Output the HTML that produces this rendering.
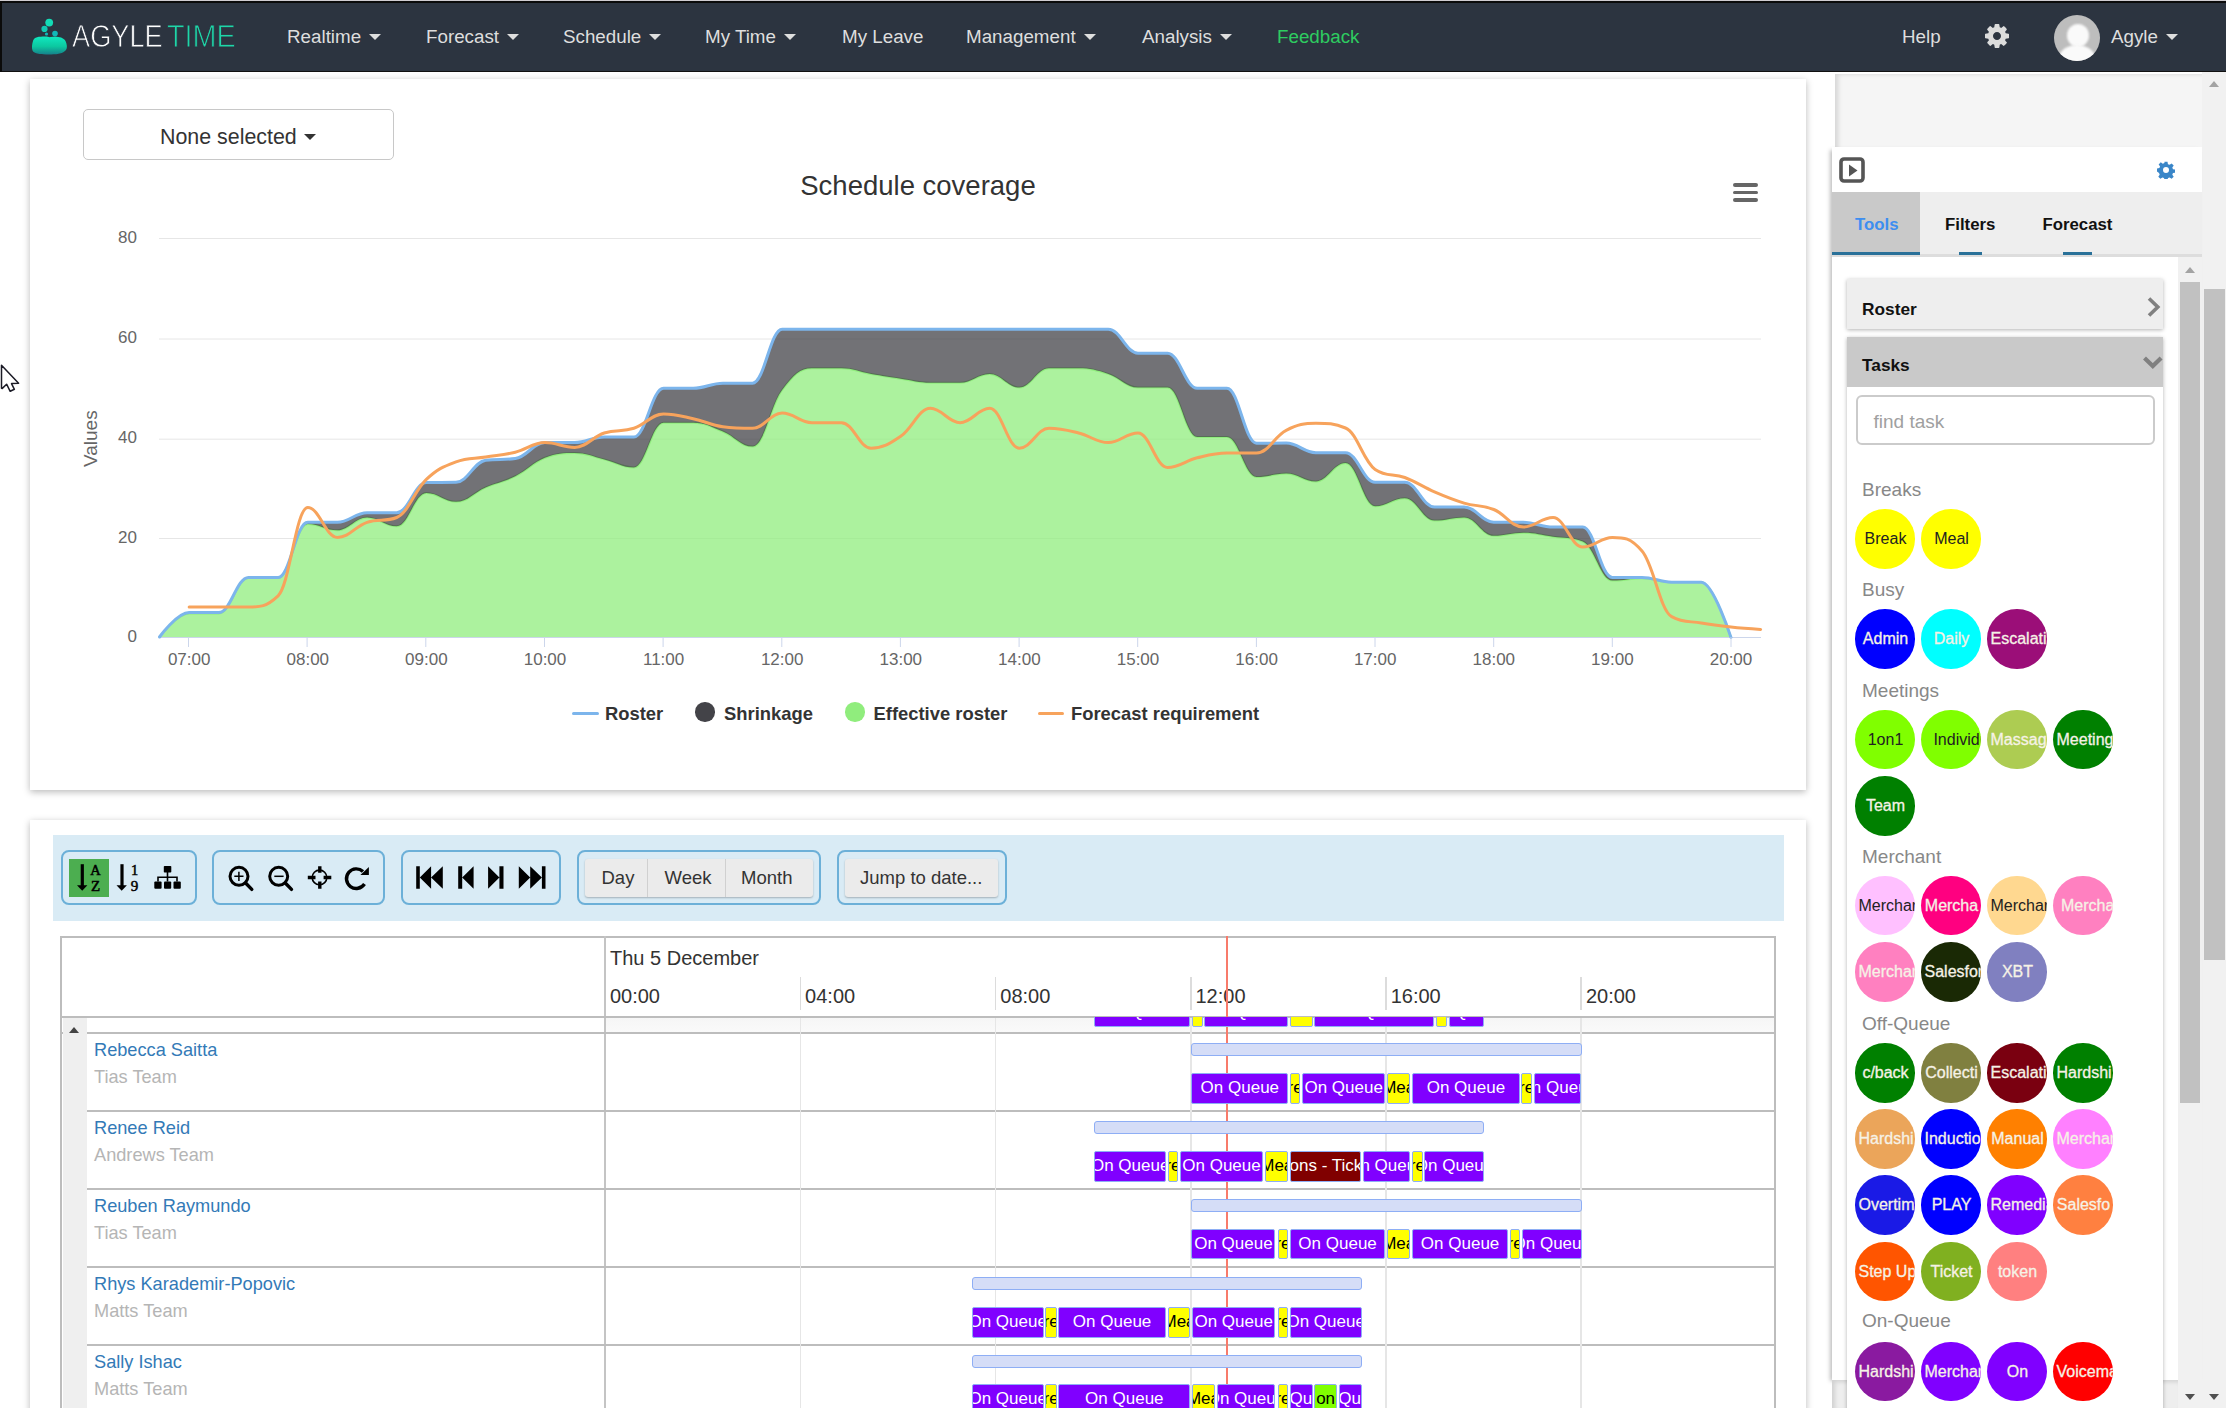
<!DOCTYPE html>
<html><head><meta charset="utf-8">
<style>
*{box-sizing:border-box;margin:0;padding:0}
html,body{width:2226px;height:1408px;overflow:hidden;background:#fff;font-family:"Liberation Sans",sans-serif;position:relative}
.abs{position:absolute}
#topline{left:0;top:0;width:2226px;height:3px;background:#0b0b0b}
#topline2{left:0;top:0;width:2226px;height:1px;background:#cfccd1;z-index:5}
#leftline{left:0;top:1px;width:2px;height:71px;background:#0b0b0b}
#nav{left:2px;top:3px;width:2224px;height:68.8px;background:#2c3440;border-bottom:1px solid #111}
.nv{position:absolute;top:23px;font-size:18.8px;color:#dedede;white-space:nowrap;line-height:22px}
.caret{display:inline-block;width:0;height:0;border-left:6px solid transparent;border-right:6px solid transparent;border-top:6px solid #dedede;vertical-align:middle;margin-left:8px;position:relative;top:-1px}
.panel{position:absolute;background:#fff;box-shadow:0 2px 7px rgba(0,0,0,.28)}
.yl{position:absolute;left:0;width:107px;text-align:right;font-size:17px;color:#666;line-height:22px}
.xl{position:absolute;top:569.5px;width:100px;text-align:center;font-size:17px;color:#666;line-height:22px}
.lg{position:absolute;top:624px;font-size:18.4px;font-weight:bold;color:#333;line-height:22px;white-space:nowrap}
</style></head><body>
<div class="abs" id="topline"></div>
<div class="abs" id="topline2"></div>
<div class="abs" id="nav">
<svg class="abs" style="left:27.5px;top:14px" width="40" height="42" viewBox="0 0 40 42">
<defs><linearGradient id="lg1" x1="0" y1="0" x2="0" y2="1"><stop offset="0" stop-color="#10e8c0"/><stop offset="0.55" stop-color="#0cc8a0"/><stop offset="1" stop-color="#16808a"/></linearGradient>
<linearGradient id="lg2" x1="0" y1="0" x2="0" y2="1"><stop offset="0" stop-color="#14d8b8"/><stop offset="1" stop-color="#10a0b0"/></linearGradient></defs>
<circle cx="19.2" cy="5.6" r="3.9" fill="#13dcb6"/>
<circle cx="14.5" cy="11.9" r="3.1" fill="#12c8b2"/>
<circle cx="25" cy="16.6" r="2.8" fill="#12b8b8"/>
<circle cx="16.5" cy="17" r="1.6" fill="#12b8b8"/>
<path d="M3 24 C4 20 9 19.5 15 19.5 C18 19.5 19 20.5 21 20 C26 19.5 33 19.5 35.5 24 C37 27 37.5 31 36 33 C33 37 25 37.5 19 37.5 C11 37.5 4 37 2.5 33.5 C1.5 31 2 27 3 24 Z" fill="url(#lg1)"/>
</svg>
<div class="nv" style="left:70px;top:14px;font-size:32px;line-height:38px;color:#fff;transform:scaleX(0.85);transform-origin:0 0;-webkit-text-stroke:0.9px #2c3440">AGYLE</div>
<div class="nv" style="left:164.5px;top:14px;font-size:32px;line-height:38px;color:#1ed6a8;transform:scaleX(0.9);transform-origin:0 0;-webkit-text-stroke:0.9px #2c3440">TIME</div>
<div class="nv" style="left:285px">Realtime<span class="caret"></span></div>
<div class="nv" style="left:424px">Forecast<span class="caret"></span></div>
<div class="nv" style="left:561px">Schedule<span class="caret"></span></div>
<div class="nv" style="left:703px">My Time<span class="caret"></span></div>
<div class="nv" style="left:840px">My Leave</div>
<div class="nv" style="left:964px">Management<span class="caret"></span></div>
<div class="nv" style="left:1140px">Analysis<span class="caret"></span></div>
<div class="nv" style="left:1275px;color:#2ecc60">Feedback</div>
<div class="nv" style="left:1900px">Help</div>
<svg class="abs" style="left:1983px;top:20.5px" width="24" height="24" viewBox="0 0 1536 1536"><path fill="#dcdcdc" d="M1024 768q0-106-75-181t-181-75-181 75-75 181 75 181 181 75 181-75 75-181zm512-109v222q0 12-8 23t-20 13l-185 28q-19 54-39 91 35 50 107 138 10 12 10 25t-9 23q-27 37-99 108t-94 71q-12 0-26-9l-138-108q-44 23-91 38-16 136-29 186-7 28-36 28h-222q-14 0-24.5-8.5t-11.5-21.5l-28-184q-49-16-90-37l-141 107q-10 9-25 9-14 0-25-11-126-114-165-168-7-10-7-23 0-12 8-23 15-21 51-66.5t54-70.5q-27-50-41-99l-183-27q-13-2-21-12.5t-8-23.5v-222q0-12 8-23t19-13l186-28q14-46 39-92-40-57-107-138-10-12-10-24 0-10 9-23 26-36 98.5-107.5t94.5-71.5q13 0 26 10l138 107q44-23 91-38 16-136 29-186 7-28 36-28h222q14 0 24.5 8.5t11.5 21.5l28 184q49 16 90 37l142-107q9-9 24-9 13 0 25 10 129 119 165 170 7 8 7 22 0 12-8 23-15 21-51 66.5t-54 70.5q26 50 41 98l183 28q13 2 21 12.5t8 23.5z"/></svg>
<div class="abs" style="left:2052px;top:12px;width:46px;height:46px;border-radius:50%;background:#bdbdbd;overflow:hidden">
<div class="abs" style="left:12.5px;top:9px;width:22px;height:23px;border-radius:50%;background:#fafafa;filter:blur(0.8px)"></div>
<div class="abs" style="left:5px;top:30px;width:36px;height:26px;border-radius:50% 50% 0 0;background:#fafafa;filter:blur(0.8px)"></div>
</div>
<div class="nv" style="left:2109px">Agyle<span class="caret"></span></div>
</div>
<div class="abs" id="leftline"></div>

<!-- chart panel -->
<div class="panel" id="chartp" style="left:30px;top:79px;width:1776px;height:711px">
<svg class="abs" style="left:0;top:0" width="1776" height="711" viewBox="30 79 1776 711">
<g stroke="#e6e6e6" stroke-width="1">
<line x1="159" y1="238.5" x2="1761" y2="238.5"/><line x1="159" y1="339" x2="1761" y2="339"/><line x1="159" y1="439.2" x2="1761" y2="439.2"/><line x1="159" y1="538.5" x2="1761" y2="538.5"/>
</g>
<path d="M159.50,637.00 C159.50,637.00 177.29,613.50 189.15,613.50 C201.01,613.50 206.94,613.50 218.80,613.50 C230.66,613.50 236.59,578.00 248.45,578.00 C260.31,578.00 266.24,578.00 278.10,578.00 C289.96,578.00 295.89,523.90 307.75,523.90 C319.61,523.90 325.54,530.30 337.40,530.30 C349.26,530.30 355.19,517.50 367.05,517.50 C378.91,517.50 384.84,526.30 396.70,526.30 C408.56,526.30 414.49,493.00 426.35,493.00 C438.21,493.00 444.14,501.80 456.00,501.80 C467.86,501.80 473.79,492.52 485.65,487.40 C497.51,482.28 503.44,482.12 515.30,476.20 C527.16,470.28 533.09,462.44 544.95,457.80 C556.81,453.16 562.74,453.00 574.60,453.00 C586.46,453.00 592.39,456.52 604.25,459.40 C616.11,462.28 622.04,467.40 633.90,467.40 C645.76,467.40 651.69,422.70 663.55,422.70 C675.41,422.70 681.34,422.70 693.20,422.70 C705.06,422.70 710.99,426.72 722.85,431.50 C734.71,436.28 740.64,446.60 752.50,446.60 C764.36,446.60 770.29,405.66 782.15,390.00 C794.01,374.34 799.94,368.30 811.80,368.30 C823.66,368.30 829.59,368.30 841.45,368.30 C853.31,368.30 859.24,371.92 871.10,374.00 C882.96,376.08 888.89,376.96 900.75,378.70 C912.61,380.44 918.54,382.70 930.40,382.70 C942.26,382.70 948.19,382.70 960.05,382.70 C971.91,382.70 977.84,373.90 989.70,373.90 C1001.56,373.90 1007.49,387.50 1019.35,387.50 C1031.21,387.50 1037.14,368.30 1049.00,368.30 C1060.86,368.30 1066.79,368.30 1078.65,368.30 C1090.51,368.30 1096.44,370.06 1108.30,373.90 C1120.16,377.74 1126.09,387.50 1137.95,387.50 C1149.81,387.50 1155.74,387.50 1167.60,387.50 C1179.46,387.50 1185.39,437.10 1197.25,437.10 C1209.11,437.10 1215.04,437.10 1226.90,437.10 C1238.76,437.10 1244.69,477.00 1256.55,477.00 C1268.41,477.00 1274.34,473.50 1286.20,473.50 C1298.06,473.50 1303.99,481.50 1315.85,481.50 C1327.71,481.50 1333.64,463.10 1345.50,463.10 C1357.36,463.10 1363.29,506.30 1375.15,506.30 C1387.01,506.30 1392.94,498.30 1404.80,498.30 C1416.66,498.30 1422.59,520.60 1434.45,520.60 C1446.31,520.60 1452.24,517.40 1464.10,517.40 C1475.96,517.40 1481.89,535.80 1493.75,535.80 C1505.61,535.80 1511.54,532.70 1523.40,532.70 C1535.26,532.70 1541.19,534.94 1553.05,536.70 C1564.91,538.46 1570.84,536.70 1582.70,541.50 C1594.56,546.30 1600.49,580.60 1612.35,580.60 C1624.21,580.60 1630.14,578.20 1642.00,578.20 C1653.86,578.20 1659.79,582.20 1671.65,582.20 C1683.51,582.20 1689.44,582.20 1701.30,582.20 C1713.16,582.20 1730.95,637.40 1730.95,637.40 L1730.95,637.4 L159.50,637.4 Z" fill="rgba(144,237,125,0.75)"/>
<path d="M159.50,637.00 C159.50,637.00 177.29,613.50 189.15,613.50 C201.01,613.50 206.94,613.50 218.80,613.50 C230.66,613.50 236.59,578.00 248.45,578.00 C260.31,578.00 266.24,578.00 278.10,578.00 C289.96,578.00 295.89,523.90 307.75,523.90 C319.61,523.90 325.54,530.30 337.40,530.30 C349.26,530.30 355.19,517.50 367.05,517.50 C378.91,517.50 384.84,526.30 396.70,526.30 C408.56,526.30 414.49,493.00 426.35,493.00 C438.21,493.00 444.14,501.80 456.00,501.80 C467.86,501.80 473.79,492.52 485.65,487.40 C497.51,482.28 503.44,482.12 515.30,476.20 C527.16,470.28 533.09,462.44 544.95,457.80 C556.81,453.16 562.74,453.00 574.60,453.00 C586.46,453.00 592.39,456.52 604.25,459.40 C616.11,462.28 622.04,467.40 633.90,467.40 C645.76,467.40 651.69,422.70 663.55,422.70 C675.41,422.70 681.34,422.70 693.20,422.70 C705.06,422.70 710.99,426.72 722.85,431.50 C734.71,436.28 740.64,446.60 752.50,446.60 C764.36,446.60 770.29,405.66 782.15,390.00 C794.01,374.34 799.94,368.30 811.80,368.30 C823.66,368.30 829.59,368.30 841.45,368.30 C853.31,368.30 859.24,371.92 871.10,374.00 C882.96,376.08 888.89,376.96 900.75,378.70 C912.61,380.44 918.54,382.70 930.40,382.70 C942.26,382.70 948.19,382.70 960.05,382.70 C971.91,382.70 977.84,373.90 989.70,373.90 C1001.56,373.90 1007.49,387.50 1019.35,387.50 C1031.21,387.50 1037.14,368.30 1049.00,368.30 C1060.86,368.30 1066.79,368.30 1078.65,368.30 C1090.51,368.30 1096.44,370.06 1108.30,373.90 C1120.16,377.74 1126.09,387.50 1137.95,387.50 C1149.81,387.50 1155.74,387.50 1167.60,387.50 C1179.46,387.50 1185.39,437.10 1197.25,437.10 C1209.11,437.10 1215.04,437.10 1226.90,437.10 C1238.76,437.10 1244.69,477.00 1256.55,477.00 C1268.41,477.00 1274.34,473.50 1286.20,473.50 C1298.06,473.50 1303.99,481.50 1315.85,481.50 C1327.71,481.50 1333.64,463.10 1345.50,463.10 C1357.36,463.10 1363.29,506.30 1375.15,506.30 C1387.01,506.30 1392.94,498.30 1404.80,498.30 C1416.66,498.30 1422.59,520.60 1434.45,520.60 C1446.31,520.60 1452.24,517.40 1464.10,517.40 C1475.96,517.40 1481.89,535.80 1493.75,535.80 C1505.61,535.80 1511.54,532.70 1523.40,532.70 C1535.26,532.70 1541.19,534.94 1553.05,536.70 C1564.91,538.46 1570.84,536.70 1582.70,541.50 C1594.56,546.30 1600.49,580.60 1612.35,580.60 C1624.21,580.60 1630.14,578.20 1642.00,578.20 C1653.86,578.20 1659.79,582.20 1671.65,582.20 C1683.51,582.20 1689.44,582.20 1701.30,582.20 C1713.16,582.20 1730.95,637.40 1730.95,637.40" fill="none" stroke="#90ed7d" stroke-width="2"/>
<path d="M159.50,637.00 C159.50,637.00 177.29,612.60 189.15,612.60 C201.01,612.60 206.94,612.60 218.80,612.60 C230.66,612.60 236.59,577.40 248.45,577.40 C260.31,577.40 266.24,577.40 278.10,577.40 C289.96,577.40 295.89,522.30 307.75,522.30 C319.61,522.30 325.54,522.30 337.40,522.30 C349.26,522.30 355.19,512.70 367.05,512.70 C378.91,512.70 384.84,512.70 396.70,512.70 C408.56,512.70 414.49,482.90 426.35,482.60 C438.21,482.30 444.14,482.60 456.00,482.30 C467.86,482.00 473.79,461.80 485.65,460.20 C497.51,458.60 503.44,460.20 515.30,458.60 C527.16,457.00 533.09,442.60 544.95,442.60 C556.81,442.60 562.74,442.60 574.60,442.60 C586.46,442.60 592.39,437.00 604.25,437.00 C616.11,437.00 622.04,437.00 633.90,437.00 C645.76,437.00 651.69,388.30 663.55,388.30 C675.41,388.30 681.34,388.30 693.20,388.30 C705.06,388.30 710.99,383.20 722.85,383.20 C734.71,383.20 740.64,383.20 752.50,383.20 C764.36,383.20 770.29,329.20 782.15,329.20 C794.01,329.20 799.94,329.20 811.80,329.20 C823.66,329.20 829.59,329.20 841.45,329.20 C853.31,329.20 859.24,329.20 871.10,329.20 C882.96,329.20 888.89,329.20 900.75,329.20 C912.61,329.20 918.54,329.20 930.40,329.20 C942.26,329.20 948.19,329.20 960.05,329.20 C971.91,329.20 977.84,329.20 989.70,329.20 C1001.56,329.20 1007.49,329.20 1019.35,329.20 C1031.21,329.20 1037.14,329.20 1049.00,329.20 C1060.86,329.20 1066.79,329.20 1078.65,329.20 C1090.51,329.20 1096.44,329.20 1108.30,329.20 C1120.16,329.20 1126.09,353.20 1137.95,353.20 C1149.81,353.20 1155.74,353.20 1167.60,353.20 C1179.46,353.20 1185.39,388.30 1197.25,388.30 C1209.11,388.30 1215.04,388.30 1226.90,388.30 C1238.76,388.30 1244.69,443.30 1256.55,443.30 C1268.41,443.30 1274.34,443.10 1286.20,443.10 C1298.06,443.10 1303.99,452.70 1315.85,452.70 C1327.71,452.70 1333.64,452.70 1345.50,452.70 C1357.36,452.70 1363.29,482.30 1375.15,482.30 C1387.01,482.30 1392.94,482.30 1404.80,482.30 C1416.66,482.30 1422.59,507.00 1434.45,507.00 C1446.31,507.00 1452.24,507.00 1464.10,507.00 C1475.96,507.00 1481.89,522.10 1493.75,522.20 C1505.61,522.30 1511.54,522.20 1523.40,522.30 C1535.26,522.40 1541.19,527.10 1553.05,527.10 C1564.91,527.10 1570.84,527.10 1582.70,527.10 C1594.56,527.10 1600.49,577.40 1612.35,577.40 C1624.21,577.40 1630.14,577.40 1642.00,577.40 C1653.86,577.40 1659.79,582.20 1671.65,582.20 C1683.51,582.20 1689.44,582.20 1701.30,582.20 C1713.16,582.20 1730.95,637.40 1730.95,637.40 L1730.95,637.40 C1730.95,637.40 1713.16,582.20 1701.30,582.20 C1689.44,582.20 1683.51,582.20 1671.65,582.20 C1659.79,582.20 1653.86,578.20 1642.00,578.20 C1630.14,578.20 1624.21,580.60 1612.35,580.60 C1600.49,580.60 1594.56,546.30 1582.70,541.50 C1570.84,536.70 1564.91,538.46 1553.05,536.70 C1541.19,534.94 1535.26,532.70 1523.40,532.70 C1511.54,532.70 1505.61,535.80 1493.75,535.80 C1481.89,535.80 1475.96,517.40 1464.10,517.40 C1452.24,517.40 1446.31,520.60 1434.45,520.60 C1422.59,520.60 1416.66,498.30 1404.80,498.30 C1392.94,498.30 1387.01,506.30 1375.15,506.30 C1363.29,506.30 1357.36,463.10 1345.50,463.10 C1333.64,463.10 1327.71,481.50 1315.85,481.50 C1303.99,481.50 1298.06,473.50 1286.20,473.50 C1274.34,473.50 1268.41,477.00 1256.55,477.00 C1244.69,477.00 1238.76,437.10 1226.90,437.10 C1215.04,437.10 1209.11,437.10 1197.25,437.10 C1185.39,437.10 1179.46,387.50 1167.60,387.50 C1155.74,387.50 1149.81,387.50 1137.95,387.50 C1126.09,387.50 1120.16,377.74 1108.30,373.90 C1096.44,370.06 1090.51,368.30 1078.65,368.30 C1066.79,368.30 1060.86,368.30 1049.00,368.30 C1037.14,368.30 1031.21,387.50 1019.35,387.50 C1007.49,387.50 1001.56,373.90 989.70,373.90 C977.84,373.90 971.91,382.70 960.05,382.70 C948.19,382.70 942.26,382.70 930.40,382.70 C918.54,382.70 912.61,380.44 900.75,378.70 C888.89,376.96 882.96,376.08 871.10,374.00 C859.24,371.92 853.31,368.30 841.45,368.30 C829.59,368.30 823.66,368.30 811.80,368.30 C799.94,368.30 794.01,374.34 782.15,390.00 C770.29,405.66 764.36,446.60 752.50,446.60 C740.64,446.60 734.71,436.28 722.85,431.50 C710.99,426.72 705.06,422.70 693.20,422.70 C681.34,422.70 675.41,422.70 663.55,422.70 C651.69,422.70 645.76,467.40 633.90,467.40 C622.04,467.40 616.11,462.28 604.25,459.40 C592.39,456.52 586.46,453.00 574.60,453.00 C562.74,453.00 556.81,453.16 544.95,457.80 C533.09,462.44 527.16,470.28 515.30,476.20 C503.44,482.12 497.51,482.28 485.65,487.40 C473.79,492.52 467.86,501.80 456.00,501.80 C444.14,501.80 438.21,493.00 426.35,493.00 C414.49,493.00 408.56,526.30 396.70,526.30 C384.84,526.30 378.91,517.50 367.05,517.50 C355.19,517.50 349.26,530.30 337.40,530.30 C325.54,530.30 319.61,523.90 307.75,523.90 C295.89,523.90 289.96,578.00 278.10,578.00 C266.24,578.00 260.31,578.00 248.45,578.00 C236.59,578.00 230.66,613.50 218.80,613.50 C206.94,613.50 201.01,613.50 189.15,613.50 C177.29,613.50 159.50,637.00 159.50,637.00 Z" fill="rgba(67,67,72,0.75)"/>
<line x1="159" y1="637.5" x2="1761" y2="637.5" stroke="#ccd6eb" stroke-width="1"/>
<path d="M159.50,637.00 C159.50,637.00 177.29,612.60 189.15,612.60 C201.01,612.60 206.94,612.60 218.80,612.60 C230.66,612.60 236.59,577.40 248.45,577.40 C260.31,577.40 266.24,577.40 278.10,577.40 C289.96,577.40 295.89,522.30 307.75,522.30 C319.61,522.30 325.54,522.30 337.40,522.30 C349.26,522.30 355.19,512.70 367.05,512.70 C378.91,512.70 384.84,512.70 396.70,512.70 C408.56,512.70 414.49,482.90 426.35,482.60 C438.21,482.30 444.14,482.60 456.00,482.30 C467.86,482.00 473.79,461.80 485.65,460.20 C497.51,458.60 503.44,460.20 515.30,458.60 C527.16,457.00 533.09,442.60 544.95,442.60 C556.81,442.60 562.74,442.60 574.60,442.60 C586.46,442.60 592.39,437.00 604.25,437.00 C616.11,437.00 622.04,437.00 633.90,437.00 C645.76,437.00 651.69,388.30 663.55,388.30 C675.41,388.30 681.34,388.30 693.20,388.30 C705.06,388.30 710.99,383.20 722.85,383.20 C734.71,383.20 740.64,383.20 752.50,383.20 C764.36,383.20 770.29,329.20 782.15,329.20 C794.01,329.20 799.94,329.20 811.80,329.20 C823.66,329.20 829.59,329.20 841.45,329.20 C853.31,329.20 859.24,329.20 871.10,329.20 C882.96,329.20 888.89,329.20 900.75,329.20 C912.61,329.20 918.54,329.20 930.40,329.20 C942.26,329.20 948.19,329.20 960.05,329.20 C971.91,329.20 977.84,329.20 989.70,329.20 C1001.56,329.20 1007.49,329.20 1019.35,329.20 C1031.21,329.20 1037.14,329.20 1049.00,329.20 C1060.86,329.20 1066.79,329.20 1078.65,329.20 C1090.51,329.20 1096.44,329.20 1108.30,329.20 C1120.16,329.20 1126.09,353.20 1137.95,353.20 C1149.81,353.20 1155.74,353.20 1167.60,353.20 C1179.46,353.20 1185.39,388.30 1197.25,388.30 C1209.11,388.30 1215.04,388.30 1226.90,388.30 C1238.76,388.30 1244.69,443.30 1256.55,443.30 C1268.41,443.30 1274.34,443.10 1286.20,443.10 C1298.06,443.10 1303.99,452.70 1315.85,452.70 C1327.71,452.70 1333.64,452.70 1345.50,452.70 C1357.36,452.70 1363.29,482.30 1375.15,482.30 C1387.01,482.30 1392.94,482.30 1404.80,482.30 C1416.66,482.30 1422.59,507.00 1434.45,507.00 C1446.31,507.00 1452.24,507.00 1464.10,507.00 C1475.96,507.00 1481.89,522.10 1493.75,522.20 C1505.61,522.30 1511.54,522.20 1523.40,522.30 C1535.26,522.40 1541.19,527.10 1553.05,527.10 C1564.91,527.10 1570.84,527.10 1582.70,527.10 C1594.56,527.10 1600.49,577.40 1612.35,577.40 C1624.21,577.40 1630.14,577.40 1642.00,577.40 C1653.86,577.40 1659.79,582.20 1671.65,582.20 C1683.51,582.20 1689.44,582.20 1701.30,582.20 C1713.16,582.20 1730.95,637.40 1730.95,637.40" fill="none" stroke="#7cb5ec" stroke-width="3" stroke-linejoin="round" stroke-linecap="round"/>
<path d="M189.15,607.00 C189.15,607.00 206.94,607.00 218.80,607.00 C230.66,607.00 236.59,607.00 248.45,607.00 C260.31,607.00 266.24,607.00 278.10,595.80 C289.96,584.60 295.89,507.60 307.75,507.60 C319.61,507.60 325.54,537.50 337.40,537.50 C349.26,537.50 355.19,526.30 367.05,522.30 C378.91,518.30 384.84,522.30 396.70,517.50 C408.56,512.70 414.49,490.54 426.35,479.40 C438.21,468.26 444.14,466.28 456.00,461.80 C467.86,457.32 473.79,458.92 485.65,457.00 C497.51,455.08 503.44,455.08 515.30,452.20 C527.16,449.32 533.09,442.60 544.95,442.60 C556.81,442.60 562.74,447.40 574.60,447.40 C586.46,447.40 592.39,436.82 604.25,433.00 C616.11,429.18 622.04,432.12 633.90,428.30 C645.76,424.48 651.69,413.90 663.55,413.90 C675.41,413.90 681.34,416.14 693.20,418.70 C705.06,421.26 710.99,425.10 722.85,426.70 C734.71,428.30 740.64,428.30 752.50,428.30 C764.36,428.30 770.29,413.10 782.15,413.10 C794.01,413.10 799.94,422.70 811.80,422.70 C823.66,422.70 829.59,422.70 841.45,422.70 C853.31,422.70 859.24,448.20 871.10,448.20 C882.96,448.20 888.89,444.28 900.75,436.30 C912.61,428.32 918.54,408.30 930.40,408.30 C942.26,408.30 948.19,422.70 960.05,422.70 C971.91,422.70 977.84,408.30 989.70,408.30 C1001.56,408.30 1007.49,448.20 1019.35,448.20 C1031.21,448.20 1037.14,428.30 1049.00,428.30 C1060.86,428.30 1066.79,430.14 1078.65,433.00 C1090.51,435.86 1096.44,442.60 1108.30,442.60 C1120.16,442.60 1126.09,433.00 1137.95,433.00 C1149.81,433.00 1155.74,467.40 1167.60,467.40 C1179.46,467.40 1185.39,460.68 1197.25,457.80 C1209.11,454.92 1215.04,453.00 1226.90,453.00 C1238.76,453.00 1244.69,453.00 1256.55,453.00 C1268.41,453.00 1274.34,436.26 1286.20,430.30 C1298.06,424.34 1303.99,423.20 1315.85,423.20 C1327.71,423.20 1333.64,423.20 1345.50,428.00 C1357.36,432.80 1363.29,461.50 1375.15,469.50 C1387.01,477.50 1392.94,473.02 1404.80,477.50 C1416.66,481.98 1422.59,486.78 1434.45,491.90 C1446.31,497.02 1452.24,499.58 1464.10,503.10 C1475.96,506.62 1481.89,504.70 1493.75,509.50 C1505.61,514.30 1511.54,527.10 1523.40,527.10 C1535.26,527.10 1541.19,517.50 1553.05,517.50 C1564.91,517.50 1570.84,547.10 1582.70,547.10 C1594.56,547.10 1600.49,537.50 1612.35,537.50 C1624.21,537.50 1630.14,537.50 1642.00,551.00 C1653.86,564.50 1659.79,610.20 1671.65,616.60 C1683.51,623.00 1689.44,620.92 1701.30,623.00 C1713.16,625.08 1719.09,625.72 1730.95,627.00 C1742.81,628.28 1760.60,629.40 1760.60,629.40" fill="none" stroke="#f7a35c" stroke-width="3" stroke-linejoin="round" stroke-linecap="round"/>
<g stroke="#ccd6eb" stroke-width="1"><line x1="188.5" y1="637" x2="188.5" y2="647"/><line x1="307.1" y1="637" x2="307.1" y2="647"/><line x1="425.8" y1="637" x2="425.8" y2="647"/><line x1="544.5" y1="637" x2="544.5" y2="647"/><line x1="663.1" y1="637" x2="663.1" y2="647"/><line x1="781.8" y1="637" x2="781.8" y2="647"/><line x1="900.4" y1="637" x2="900.4" y2="647"/><line x1="1019.1" y1="637" x2="1019.1" y2="647"/><line x1="1137.7" y1="637" x2="1137.7" y2="647"/><line x1="1256.4" y1="637" x2="1256.4" y2="647"/><line x1="1375.0" y1="637" x2="1375.0" y2="647"/><line x1="1493.7" y1="637" x2="1493.7" y2="647"/><line x1="1612.3" y1="637" x2="1612.3" y2="647"/><line x1="1731.0" y1="637" x2="1731.0" y2="647"/></g>
</svg>
<div class="abs" style="left:53px;top:30px;width:311px;height:51px;border:1.5px solid #c8c8c8;border-radius:5px"></div>
<div class="abs" style="left:130px;top:44.5px;font-size:21.4px;color:#333;line-height:26px;white-space:nowrap">None selected</div>
<div class="abs" style="left:274px;top:55px;width:0;height:0;border-left:6px solid transparent;border-right:6px solid transparent;border-top:6px solid #333"></div>
<div class="abs" style="left:0;top:91px;width:1776px;text-align:center;font-size:27.5px;color:#333;line-height:32px;padding-right:0;white-space:nowrap">Schedule coverage</div>
<div class="abs" style="left:1703px;top:104px;width:25px;height:3.5px;background:#666;border-radius:2px"></div>
<div class="abs" style="left:1703px;top:111.5px;width:25px;height:3.5px;background:#666;border-radius:2px"></div>
<div class="abs" style="left:1703px;top:119px;width:25px;height:3.5px;background:#666;border-radius:2px"></div>
<div class="yl" style="top:148px">80</div><div class="yl" style="top:248px">60</div><div class="yl" style="top:348px">40</div><div class="yl" style="top:448px">20</div><div class="yl" style="top:547px">0</div>
<div class="xl" style="left:109.2px">07:00</div><div class="xl" style="left:227.8px">08:00</div><div class="xl" style="left:346.4px">09:00</div><div class="xl" style="left:465.0px">10:00</div><div class="xl" style="left:583.6px">11:00</div><div class="xl" style="left:702.2px">12:00</div><div class="xl" style="left:820.8px">13:00</div><div class="xl" style="left:939.4px">14:00</div><div class="xl" style="left:1058.0px">15:00</div><div class="xl" style="left:1176.6px">16:00</div><div class="xl" style="left:1295.2px">17:00</div><div class="xl" style="left:1413.8px">18:00</div><div class="xl" style="left:1532.4px">19:00</div><div class="xl" style="left:1651.0px">20:00</div>
<div class="abs" style="left:33px;top:349px;width:56px;height:22px;font-size:19px;color:#666;line-height:22px;transform:rotate(-90deg);transform-origin:center center;white-space:nowrap"><span style="position:relative;left:0">Values</span></div>
<div class="abs" style="left:542px;top:632.5px;width:27px;height:3px;border-radius:1.5px;background:#7cb5ec"></div>
<div class="lg" style="left:575px">Roster</div>
<div class="abs" style="left:665px;top:623.2px;width:19.5px;height:19.5px;border-radius:50%;background:#434348"></div>
<div class="lg" style="left:694px">Shrinkage</div>
<div class="abs" style="left:815px;top:623.2px;width:19.5px;height:19.5px;border-radius:50%;background:#90ed7d"></div>
<div class="lg" style="left:843.5px">Effective roster</div>
<div class="abs" style="left:1008px;top:632.5px;width:26px;height:3px;border-radius:1.5px;background:#f7a35c"></div>
<div class="lg" style="left:1041px">Forecast requirement</div>
</div>

<!-- scheduler panel -->
<div class="panel" id="schedp" style="left:30px;top:820px;width:1776px;height:600px;overflow:hidden">
<div class="abs" style="left:23.0px;top:15.0px;width:1731.0px;height:86.0px;background:#d9ebf5"></div>
<div class="abs" style="left:30.5px;top:30.3px;width:136.5px;height:55.0px;border:2.4px solid #6cb0d8;border-radius:8px"></div>
<div class="abs" style="left:182.3px;top:30.3px;width:173.2px;height:55.0px;border:2.4px solid #6cb0d8;border-radius:8px"></div>
<div class="abs" style="left:371.0px;top:30.3px;width:160.0px;height:55.0px;border:2.4px solid #6cb0d8;border-radius:8px"></div>
<div class="abs" style="left:546.7px;top:30.3px;width:244.8px;height:55.0px;border:2.4px solid #6cb0d8;border-radius:8px"></div>
<div class="abs" style="left:806.6px;top:30.3px;width:170.4px;height:55.0px;border:2.4px solid #6cb0d8;border-radius:8px"></div>
<div class="abs" style="left:39.1px;top:39.1px;width:39.5px;height:37.8px;background:#4cae50"></div>
<svg class="abs" style="left:23px;top:30px" width="520" height="50" viewBox="53 850 520 50">
<path d="M82.3 864.2v22" stroke="#000" stroke-width="3.2"/><path d="M77 885.2h10.4l-5.2 5.6z" fill="#000"/>
<text x="95.5" y="874.9" text-anchor="middle" font-family="Liberation Serif" font-size="14.5" fill="#000" stroke="#000" stroke-width="0.5">A</text>
<text x="95.5" y="890.7" text-anchor="middle" font-family="Liberation Serif" font-size="15" fill="#000" stroke="#000" stroke-width="0.5">Z</text>
<path d="M122 864.2v22" stroke="#000" stroke-width="3.2"/><path d="M116.5 885.2h10.4l-5.2 5.6z" fill="#000"/>
<text x="134.5" y="875" text-anchor="middle" font-family="Liberation Serif" font-size="14.5" fill="#000" stroke="#000" stroke-width="0.5">1</text>
<text x="134.5" y="890.7" text-anchor="middle" font-family="Liberation Serif" font-size="15" fill="#000" stroke="#000" stroke-width="0.5">9</text>
<rect x="163.8" y="866" width="7.5" height="6.6" rx="0.8" fill="#000"/>
<path d="M167.5 872v9.5M158 881.5v-4.2h19v4.2" stroke="#000" stroke-width="1.6" fill="none"/>
<rect x="154.3" y="881.4" width="7.3" height="7.3" rx="1" fill="#000"/><rect x="164" y="881.4" width="7.2" height="7.3" rx="1" fill="#000"/><rect x="173.5" y="881.4" width="7.3" height="7.3" rx="1" fill="#000"/>
<circle cx="239" cy="876.3" r="9" stroke="#000" stroke-width="3" fill="none"/><path d="M245.6 883l6.2 6.4" stroke="#000" stroke-width="3.4" stroke-linecap="round"/>
<path d="M234.3 876.3h9.2M238.9 871.7v9.2" stroke="#000" stroke-width="1.5"/>
<circle cx="278.7" cy="876.3" r="9" stroke="#000" stroke-width="3" fill="none"/><path d="M285.3 883l6.2 6.4" stroke="#000" stroke-width="3.4" stroke-linecap="round"/>
<path d="M274.3 876.3h9.3" stroke="#000" stroke-width="1.5"/>
<circle cx="319.5" cy="877.4" r="7.3" stroke="#000" stroke-width="1.6" fill="none"/>
<path d="M319.8 866.2v6.5M319.8 881.5v7.3M307.8 877.5h7.7M323.6 877.5h7.7" stroke="#000" stroke-width="3.4"/>
<path d="M363 871.5A9.8 9.8 0 1 0 364.5 884" stroke="#000" stroke-width="3.4" fill="none"/><path d="M368.9 867v8.1h-8.5z" fill="#000"/>
<path d="M416.2 866.2h3.6v22.6h-3.6z M419.8 877.5l11.3-11.3v22.6z M431.1 877.5l11.7-11.3v22.6z" fill="#000"/>
<path d="M458.2 866.2h4v22.6h-4z M462.2 877.5l11.4-11.3v22.6z" fill="#000"/>
<path d="M499.4 866.2h4.1v22.6h-4.1z M499.4 877.5l-11.3-11.3v22.6z" fill="#000"/>
<path d="M541.9 866.2h3.6v22.6h-3.6z M530.2 877.5l-11.4-11.3v22.6z M541.9 877.5l-11.7-11.3v22.6z" fill="#000"/>
</svg>
<div class="abs" style="left:554.6px;top:39.0px;width:228.4px;height:37.5px;background:#ebebeb;border-radius:3px;box-shadow:0 1px 2px rgba(0,0,0,.25)"></div>
<div class="abs" style="left:616.5px;top:39.0px;width:1.5px;height:37.5px;background:#d0d0d0"></div>
<div class="abs" style="left:694.5px;top:39.0px;width:1.5px;height:37.5px;background:#d0d0d0"></div>
<div class="abs" style="left:571.5px;top:46.5px;width:60.0px;height:22.0px;font-size:18.5px;color:#333;line-height:22px;white-space:nowrap">Day</div>
<div class="abs" style="left:634.5px;top:46.5px;width:60.0px;height:22.0px;font-size:18.5px;color:#333;line-height:22px;white-space:nowrap">Week</div>
<div class="abs" style="left:711.0px;top:46.5px;width:60.0px;height:22.0px;font-size:18.5px;color:#333;line-height:22px;white-space:nowrap">Month</div>
<div class="abs" style="left:815.0px;top:39.0px;width:153.0px;height:37.5px;background:#ebebeb;border-radius:3px;box-shadow:0 1px 2px rgba(0,0,0,.25)"></div>
<div class="abs" style="left:830.0px;top:46.5px;width:140.0px;height:22.0px;font-size:18.5px;color:#333;line-height:22px;white-space:nowrap">Jump to date...</div>
<div class="abs" style="left:30.2px;top:116.0px;width:1716.0px;height:520.0px;border:2px solid #bdbdbd;border-bottom:none"></div>
<div class="abs" style="left:574.0px;top:116.0px;width:2.0px;height:520.0px;background:#c4c4c4"></div>
<div class="abs" style="left:31.0px;top:196.0px;width:1715.0px;height:2.0px;background:#bdbdbd"></div>
<div class="abs" style="left:576.0px;top:198.0px;width:1168.0px;height:15.0px;background:linear-gradient(#f6f6f6,#fafafa)"></div>
<div class="abs" style="left:31.0px;top:212.0px;width:1715.0px;height:2.0px;background:#bdbdbd"></div>
<div class="abs" style="left:32.5px;top:198.0px;width:24.0px;height:400.0px;background:#efefef"></div>
<div class="abs" style="left:32.5px;top:212.0px;width:24.0px;height:2.0px;background:#efefef"></div>
<div class="abs" style="left:38.7px;top:206.7px;width:0.0px;height:0.0px;border-left:5.8px solid transparent;border-right:5.8px solid transparent;border-bottom:6px solid #444"></div>
<div class="abs" style="left:56.5px;top:290.0px;width:1689.0px;height:2.0px;background:#bdbdbd"></div>
<div class="abs" style="left:56.5px;top:368.0px;width:1689.0px;height:2.0px;background:#bdbdbd"></div>
<div class="abs" style="left:56.5px;top:446.0px;width:1689.0px;height:2.0px;background:#bdbdbd"></div>
<div class="abs" style="left:56.5px;top:524.0px;width:1689.0px;height:2.0px;background:#bdbdbd"></div>
<div class="abs" style="left:769.6px;top:157.0px;width:1.5px;height:33.0px;background:#dcdcdc"></div>
<div class="abs" style="left:769.6px;top:198.0px;width:1.5px;height:400.0px;background:#e6e6e6"></div>
<div class="abs" style="left:964.8px;top:157.0px;width:1.5px;height:33.0px;background:#dcdcdc"></div>
<div class="abs" style="left:964.8px;top:198.0px;width:1.5px;height:400.0px;background:#e6e6e6"></div>
<div class="abs" style="left:1160.0px;top:157.0px;width:1.5px;height:33.0px;background:#dcdcdc"></div>
<div class="abs" style="left:1160.0px;top:198.0px;width:1.5px;height:400.0px;background:#e6e6e6"></div>
<div class="abs" style="left:1355.2px;top:157.0px;width:1.5px;height:33.0px;background:#dcdcdc"></div>
<div class="abs" style="left:1355.2px;top:198.0px;width:1.5px;height:400.0px;background:#e6e6e6"></div>
<div class="abs" style="left:1550.4px;top:157.0px;width:1.5px;height:33.0px;background:#dcdcdc"></div>
<div class="abs" style="left:1550.4px;top:198.0px;width:1.5px;height:400.0px;background:#e6e6e6"></div>
<div class="abs" style="left:580.0px;top:125.5px;width:300.0px;height:26.0px;font-size:20px;color:#333;line-height:24px;white-space:nowrap">Thu 5 December</div>
<div class="abs" style="left:579.9px;top:164.0px;width:80.0px;height:26.0px;font-size:20px;color:#333;line-height:24px;white-space:nowrap">00:00</div>
<div class="abs" style="left:775.1px;top:164.0px;width:80.0px;height:26.0px;font-size:20px;color:#333;line-height:24px;white-space:nowrap">04:00</div>
<div class="abs" style="left:970.3px;top:164.0px;width:80.0px;height:26.0px;font-size:20px;color:#333;line-height:24px;white-space:nowrap">08:00</div>
<div class="abs" style="left:1165.5px;top:164.0px;width:80.0px;height:26.0px;font-size:20px;color:#333;line-height:24px;white-space:nowrap">12:00</div>
<div class="abs" style="left:1360.7px;top:164.0px;width:80.0px;height:26.0px;font-size:20px;color:#333;line-height:24px;white-space:nowrap">16:00</div>
<div class="abs" style="left:1555.9px;top:164.0px;width:80.0px;height:26.0px;font-size:20px;color:#333;line-height:24px;white-space:nowrap">20:00</div>
<div class="abs" style="left:64.0px;top:219.0px;width:400.0px;height:24.0px;font-size:18.2px;color:#337ab7;line-height:22px;white-space:nowrap">Rebecca Saitta</div>
<div class="abs" style="left:64.0px;top:245.5px;width:400.0px;height:24.0px;font-size:18.2px;color:#b5b5b5;line-height:22px;white-space:nowrap">Tias Team</div>
<div class="abs" style="left:64.0px;top:297.0px;width:400.0px;height:24.0px;font-size:18.2px;color:#337ab7;line-height:22px;white-space:nowrap">Renee Reid</div>
<div class="abs" style="left:64.0px;top:323.5px;width:400.0px;height:24.0px;font-size:18.2px;color:#b5b5b5;line-height:22px;white-space:nowrap">Andrews Team</div>
<div class="abs" style="left:64.0px;top:375.0px;width:400.0px;height:24.0px;font-size:18.2px;color:#337ab7;line-height:22px;white-space:nowrap">Reuben Raymundo</div>
<div class="abs" style="left:64.0px;top:401.5px;width:400.0px;height:24.0px;font-size:18.2px;color:#b5b5b5;line-height:22px;white-space:nowrap">Tias Team</div>
<div class="abs" style="left:64.0px;top:453.0px;width:400.0px;height:24.0px;font-size:18.2px;color:#337ab7;line-height:22px;white-space:nowrap">Rhys Karademir-Popovic</div>
<div class="abs" style="left:64.0px;top:479.5px;width:400.0px;height:24.0px;font-size:18.2px;color:#b5b5b5;line-height:22px;white-space:nowrap">Matts Team</div>
<div class="abs" style="left:64.0px;top:531.0px;width:400.0px;height:24.0px;font-size:18.2px;color:#337ab7;line-height:22px;white-space:nowrap">Sally Ishac</div>
<div class="abs" style="left:64.0px;top:557.5px;width:400.0px;height:24.0px;font-size:18.2px;color:#b5b5b5;line-height:22px;white-space:nowrap">Matts Team</div>
<div class="abs" style="left:1195.5px;top:116.0px;width:2.0px;height:480.0px;background:#f87b6b"></div>
<div class="abs" style="left:576.0px;top:196.5px;width:1169.0px;height:15.5px;overflow:hidden"><div class="abs" style="left:488.3px;top:-20.5px;width:96.2px;height:31px;background:#8000ff;border:1.5px solid #8eaef5;border-radius:2px;overflow:hidden"><span style="position:absolute;left:50%;top:0;transform:translateX(-50%);white-space:nowrap;font-size:17px;line-height:29px;color:#fff">On Queue</span></div><div class="abs" style="left:586.0px;top:-20.5px;width:10.7px;height:31px;background:#ffff00;border:1.5px solid #8eaef5;border-radius:2px;overflow:hidden"><span style="position:absolute;left:50%;top:0;transform:translateX(-50%);white-space:nowrap;font-size:17px;line-height:29px;color:#ffff00">On Queue</span></div><div class="abs" style="left:598.2px;top:-20.5px;width:84.1px;height:31px;background:#8000ff;border:1.5px solid #8eaef5;border-radius:2px;overflow:hidden"><span style="position:absolute;left:50%;top:0;transform:translateX(-50%);white-space:nowrap;font-size:17px;line-height:29px;color:#fff">On Queue</span></div><div class="abs" style="left:683.8px;top:-20.5px;width:22.9px;height:31px;background:#ffff00;border:1.5px solid #8eaef5;border-radius:2px;overflow:hidden"><span style="position:absolute;left:50%;top:0;transform:translateX(-50%);white-space:nowrap;font-size:17px;line-height:29px;color:#ffff00">On Queue</span></div><div class="abs" style="left:708.2px;top:-20.5px;width:120.1px;height:31px;background:#8000ff;border:1.5px solid #8eaef5;border-radius:2px;overflow:hidden"><span style="position:absolute;left:50%;top:0;transform:translateX(-50%);white-space:nowrap;font-size:17px;line-height:29px;color:#fff">On Queue</span></div><div class="abs" style="left:830.4px;top:-20.5px;width:10.7px;height:31px;background:#ffff00;border:1.5px solid #8eaef5;border-radius:2px;overflow:hidden"><span style="position:absolute;left:50%;top:0;transform:translateX(-50%);white-space:nowrap;font-size:17px;line-height:29px;color:#ffff00">On Queue</span></div><div class="abs" style="left:842.6px;top:-20.5px;width:35.2px;height:31px;background:#8000ff;border:1.5px solid #8eaef5;border-radius:2px;overflow:hidden"><span style="position:absolute;left:50%;top:0;transform:translateX(-50%);white-space:nowrap;font-size:17px;line-height:29px;color:#fff">On Queue</span></div></div>
<div class="abs" style="left:1161.4px;top:222.8px;width:390.7px;height:13.7px;background:#d5ddf7;border:1.5px solid #8eaef5;border-radius:3px"></div>
<div class="abs" style="left:1161.4px;top:252.7px;width:96.9px;height:31.2px;background:#8000ff;border:1.5px solid #8eaef5;border-radius:2px;overflow:hidden"><span style="position:absolute;left:50%;top:0;transform:translateX(calc(-50% + 0px));white-space:nowrap;font-size:17px;line-height:28.2px;color:#fff">On Queue</span></div>
<div class="abs" style="left:1259.8px;top:252.7px;width:10.7px;height:31.2px;background:#ffff00;border:1.5px solid #8eaef5;border-radius:2px;overflow:hidden"><span style="position:absolute;left:50%;top:0;transform:translateX(calc(-50% + 0px));white-space:nowrap;font-size:17px;line-height:28.2px;color:#000">re</span></div>
<div class="abs" style="left:1272.0px;top:252.7px;width:83.4px;height:31.2px;background:#8000ff;border:1.5px solid #8eaef5;border-radius:2px;overflow:hidden"><span style="position:absolute;left:50%;top:0;transform:translateX(calc(-50% + 0px));white-space:nowrap;font-size:17px;line-height:28.2px;color:#fff">On Queue</span></div>
<div class="abs" style="left:1357.0px;top:252.7px;width:23.4px;height:31.2px;background:#ffff00;border:1.5px solid #8eaef5;border-radius:2px;overflow:hidden"><span style="position:absolute;left:50%;top:0;transform:translateX(calc(-50% + 0px));white-space:nowrap;font-size:17px;line-height:28.2px;color:#000">Mea</span></div>
<div class="abs" style="left:1382.0px;top:252.7px;width:107.8px;height:31.2px;background:#8000ff;border:1.5px solid #8eaef5;border-radius:2px;overflow:hidden"><span style="position:absolute;left:50%;top:0;transform:translateX(calc(-50% + 0px));white-space:nowrap;font-size:17px;line-height:28.2px;color:#fff">On Queue</span></div>
<div class="abs" style="left:1491.3px;top:252.7px;width:10.7px;height:31.2px;background:#ffff00;border:1.5px solid #8eaef5;border-radius:2px;overflow:hidden"><span style="position:absolute;left:50%;top:0;transform:translateX(calc(-50% + 0px));white-space:nowrap;font-size:17px;line-height:28.2px;color:#000">re</span></div>
<div class="abs" style="left:1504.2px;top:252.7px;width:47.3px;height:31.2px;background:#8000ff;border:1.5px solid #8eaef5;border-radius:2px;overflow:hidden"><span style="position:absolute;left:50%;top:0;transform:translateX(calc(-50% + 0px));white-space:nowrap;font-size:17px;line-height:28.2px;color:#fff">On Queue</span></div>
<div class="abs" style="left:1064.3px;top:300.7px;width:390.1px;height:13.7px;background:#d5ddf7;border:1.5px solid #8eaef5;border-radius:3px"></div>
<div class="abs" style="left:1064.3px;top:331.2px;width:71.7px;height:30.6px;background:#8000ff;border:1.5px solid #8eaef5;border-radius:2px;overflow:hidden"><span style="position:absolute;left:50%;top:0;transform:translateX(calc(-50% + 0px));white-space:nowrap;font-size:17px;line-height:27.6px;color:#fff">On Queue</span></div>
<div class="abs" style="left:1137.6px;top:331.2px;width:10.7px;height:30.6px;background:#ffff00;border:1.5px solid #8eaef5;border-radius:2px;overflow:hidden"><span style="position:absolute;left:50%;top:0;transform:translateX(calc(-50% + 0px));white-space:nowrap;font-size:17px;line-height:27.6px;color:#000">re</span></div>
<div class="abs" style="left:1149.8px;top:331.2px;width:83.4px;height:30.6px;background:#8000ff;border:1.5px solid #8eaef5;border-radius:2px;overflow:hidden"><span style="position:absolute;left:50%;top:0;transform:translateX(calc(-50% + 0px));white-space:nowrap;font-size:17px;line-height:27.6px;color:#fff">On Queue</span></div>
<div class="abs" style="left:1235.3px;top:331.2px;width:23.0px;height:30.6px;background:#ffff00;border:1.5px solid #8eaef5;border-radius:2px;overflow:hidden"><span style="position:absolute;left:50%;top:0;transform:translateX(calc(-50% + 0px));white-space:nowrap;font-size:17px;line-height:27.6px;color:#000">Mea</span></div>
<div class="abs" style="left:1259.8px;top:331.2px;width:71.2px;height:30.6px;background:#800000;border:1.5px solid #8eaef5;border-radius:2px;overflow:hidden"><span style="position:absolute;left:50%;top:0;transform:translateX(calc(-50% + -16px));white-space:nowrap;font-size:17px;line-height:27.6px;color:#fff">Operations - Tickets</span></div>
<div class="abs" style="left:1332.5px;top:331.2px;width:47.9px;height:30.6px;background:#8000ff;border:1.5px solid #8eaef5;border-radius:2px;overflow:hidden"><span style="position:absolute;left:50%;top:0;transform:translateX(calc(-50% + 0px));white-space:nowrap;font-size:17px;line-height:27.6px;color:#fff">On Queue</span></div>
<div class="abs" style="left:1382.0px;top:331.2px;width:10.7px;height:30.6px;background:#ffff00;border:1.5px solid #8eaef5;border-radius:2px;overflow:hidden"><span style="position:absolute;left:50%;top:0;transform:translateX(calc(-50% + 0px));white-space:nowrap;font-size:17px;line-height:27.6px;color:#000">re</span></div>
<div class="abs" style="left:1394.2px;top:331.2px;width:59.6px;height:30.6px;background:#8000ff;border:1.5px solid #8eaef5;border-radius:2px;overflow:hidden"><span style="position:absolute;left:50%;top:0;transform:translateX(calc(-50% + 0px));white-space:nowrap;font-size:17px;line-height:27.6px;color:#fff">On Queue</span></div>
<div class="abs" style="left:1161.4px;top:378.6px;width:390.7px;height:13.7px;background:#d5ddf7;border:1.5px solid #8eaef5;border-radius:3px"></div>
<div class="abs" style="left:1161.4px;top:408.5px;width:84.0px;height:30.5px;background:#8000ff;border:1.5px solid #8eaef5;border-radius:2px;overflow:hidden"><span style="position:absolute;left:50%;top:0;transform:translateX(calc(-50% + 0px));white-space:nowrap;font-size:17px;line-height:27.5px;color:#fff">On Queue</span></div>
<div class="abs" style="left:1247.6px;top:408.5px;width:10.7px;height:30.5px;background:#ffff00;border:1.5px solid #8eaef5;border-radius:2px;overflow:hidden"><span style="position:absolute;left:50%;top:0;transform:translateX(calc(-50% + 0px));white-space:nowrap;font-size:17px;line-height:27.5px;color:#000">re</span></div>
<div class="abs" style="left:1259.8px;top:408.5px;width:95.6px;height:30.5px;background:#8000ff;border:1.5px solid #8eaef5;border-radius:2px;overflow:hidden"><span style="position:absolute;left:50%;top:0;transform:translateX(calc(-50% + 0px));white-space:nowrap;font-size:17px;line-height:27.5px;color:#fff">On Queue</span></div>
<div class="abs" style="left:1357.0px;top:408.5px;width:23.4px;height:30.5px;background:#ffff00;border:1.5px solid #8eaef5;border-radius:2px;overflow:hidden"><span style="position:absolute;left:50%;top:0;transform:translateX(calc(-50% + 0px));white-space:nowrap;font-size:17px;line-height:27.5px;color:#000">Mea</span></div>
<div class="abs" style="left:1382.0px;top:408.5px;width:96.2px;height:30.5px;background:#8000ff;border:1.5px solid #8eaef5;border-radius:2px;overflow:hidden"><span style="position:absolute;left:50%;top:0;transform:translateX(calc(-50% + 0px));white-space:nowrap;font-size:17px;line-height:27.5px;color:#fff">On Queue</span></div>
<div class="abs" style="left:1479.7px;top:408.5px;width:10.7px;height:30.5px;background:#ffff00;border:1.5px solid #8eaef5;border-radius:2px;overflow:hidden"><span style="position:absolute;left:50%;top:0;transform:translateX(calc(-50% + 0px));white-space:nowrap;font-size:17px;line-height:27.5px;color:#000">re</span></div>
<div class="abs" style="left:1492.0px;top:408.5px;width:59.5px;height:30.5px;background:#8000ff;border:1.5px solid #8eaef5;border-radius:2px;overflow:hidden"><span style="position:absolute;left:50%;top:0;transform:translateX(calc(-50% + 0px));white-space:nowrap;font-size:17px;line-height:27.5px;color:#fff">On Queue</span></div>
<div class="abs" style="left:941.5px;top:456.9px;width:390.7px;height:13.4px;background:#d5ddf7;border:1.5px solid #8eaef5;border-radius:3px"></div>
<div class="abs" style="left:941.5px;top:486.5px;width:72.4px;height:31.2px;background:#8000ff;border:1.5px solid #8eaef5;border-radius:2px;overflow:hidden"><span style="position:absolute;left:50%;top:0;transform:translateX(calc(-50% + 0px));white-space:nowrap;font-size:17px;line-height:28.2px;color:#fff">On Queue</span></div>
<div class="abs" style="left:1015.4px;top:486.5px;width:11.3px;height:31.2px;background:#ffff00;border:1.5px solid #8eaef5;border-radius:2px;overflow:hidden"><span style="position:absolute;left:50%;top:0;transform:translateX(calc(-50% + 0px));white-space:nowrap;font-size:17px;line-height:28.2px;color:#000">re</span></div>
<div class="abs" style="left:1028.2px;top:486.5px;width:107.8px;height:31.2px;background:#8000ff;border:1.5px solid #8eaef5;border-radius:2px;overflow:hidden"><span style="position:absolute;left:50%;top:0;transform:translateX(calc(-50% + 0px));white-space:nowrap;font-size:17px;line-height:28.2px;color:#fff">On Queue</span></div>
<div class="abs" style="left:1137.6px;top:486.5px;width:22.9px;height:31.2px;background:#ffff00;border:1.5px solid #8eaef5;border-radius:2px;overflow:hidden"><span style="position:absolute;left:50%;top:0;transform:translateX(calc(-50% + 0px));white-space:nowrap;font-size:17px;line-height:28.2px;color:#000">Mea</span></div>
<div class="abs" style="left:1162.0px;top:486.5px;width:83.4px;height:31.2px;background:#8000ff;border:1.5px solid #8eaef5;border-radius:2px;overflow:hidden"><span style="position:absolute;left:50%;top:0;transform:translateX(calc(-50% + 0px));white-space:nowrap;font-size:17px;line-height:28.2px;color:#fff">On Queue</span></div>
<div class="abs" style="left:1247.6px;top:486.5px;width:10.7px;height:31.2px;background:#ffff00;border:1.5px solid #8eaef5;border-radius:2px;overflow:hidden"><span style="position:absolute;left:50%;top:0;transform:translateX(calc(-50% + 0px));white-space:nowrap;font-size:17px;line-height:28.2px;color:#000">re</span></div>
<div class="abs" style="left:1259.8px;top:486.5px;width:71.8px;height:31.2px;background:#8000ff;border:1.5px solid #8eaef5;border-radius:2px;overflow:hidden"><span style="position:absolute;left:50%;top:0;transform:translateX(calc(-50% + 0px));white-space:nowrap;font-size:17px;line-height:28.2px;color:#fff">On Queue</span></div>
<div class="abs" style="left:941.5px;top:534.8px;width:390.7px;height:13.4px;background:#d5ddf7;border:1.5px solid #8eaef5;border-radius:3px"></div>
<div class="abs" style="left:941.5px;top:564.4px;width:72.4px;height:31.2px;background:#8000ff;border:1.5px solid #8eaef5;border-radius:2px;overflow:hidden"><span style="position:absolute;left:50%;top:0;transform:translateX(calc(-50% + 0px));white-space:nowrap;font-size:17px;line-height:28.2px;color:#fff">On Queue</span></div>
<div class="abs" style="left:1015.4px;top:564.4px;width:11.3px;height:31.2px;background:#ffff00;border:1.5px solid #8eaef5;border-radius:2px;overflow:hidden"><span style="position:absolute;left:50%;top:0;transform:translateX(calc(-50% + 0px));white-space:nowrap;font-size:17px;line-height:28.2px;color:#000">re</span></div>
<div class="abs" style="left:1028.2px;top:564.4px;width:132.3px;height:31.2px;background:#8000ff;border:1.5px solid #8eaef5;border-radius:2px;overflow:hidden"><span style="position:absolute;left:50%;top:0;transform:translateX(calc(-50% + 0px));white-space:nowrap;font-size:17px;line-height:28.2px;color:#fff">On Queue</span></div>
<div class="abs" style="left:1162.0px;top:564.4px;width:23.0px;height:31.2px;background:#ffff00;border:1.5px solid #8eaef5;border-radius:2px;overflow:hidden"><span style="position:absolute;left:50%;top:0;transform:translateX(calc(-50% + 0px));white-space:nowrap;font-size:17px;line-height:28.2px;color:#000">Mea</span></div>
<div class="abs" style="left:1186.5px;top:564.4px;width:58.9px;height:31.2px;background:#8000ff;border:1.5px solid #8eaef5;border-radius:2px;overflow:hidden"><span style="position:absolute;left:50%;top:0;transform:translateX(calc(-50% + 0px));white-space:nowrap;font-size:17px;line-height:28.2px;color:#fff">On Queue</span></div>
<div class="abs" style="left:1247.6px;top:564.4px;width:10.7px;height:31.2px;background:#ffff00;border:1.5px solid #8eaef5;border-radius:2px;overflow:hidden"><span style="position:absolute;left:50%;top:0;transform:translateX(calc(-50% + 0px));white-space:nowrap;font-size:17px;line-height:28.2px;color:#000">re</span></div>
<div class="abs" style="left:1259.8px;top:564.4px;width:22.9px;height:31.2px;background:#8000ff;border:1.5px solid #8eaef5;border-radius:2px;overflow:hidden"><span style="position:absolute;left:50%;top:0;transform:translateX(calc(-50% + 0px));white-space:nowrap;font-size:17px;line-height:28.2px;color:#fff">On Queue</span></div>
<div class="abs" style="left:1284.2px;top:564.4px;width:22.9px;height:31.2px;background:#80ff00;border:1.5px solid #8eaef5;border-radius:2px;overflow:hidden"><span style="position:absolute;left:50%;top:0;transform:translateX(calc(-50% + 0px));white-space:nowrap;font-size:17px;line-height:28.2px;color:#000">on</span></div>
<div class="abs" style="left:1308.7px;top:564.4px;width:22.9px;height:31.2px;background:#8000ff;border:1.5px solid #8eaef5;border-radius:2px;overflow:hidden"><span style="position:absolute;left:50%;top:0;transform:translateX(calc(-50% + 0px));white-space:nowrap;font-size:17px;line-height:28.2px;color:#fff">On Queue</span></div>
</div>

<!-- right panel -->
<div id="rp">
<div class="abs" style="left:1835.0px;top:74.2px;width:367.0px;height:1334.0px;background:#f5f5f5;box-shadow:inset 4px 1px 5px -1px rgba(0,0,0,.13)"></div>
<div class="abs" style="left:2202.0px;top:72.0px;width:24.0px;height:1336.0px;background:#f1f1f1"></div>
<div class="abs" style="left:2208.5px;top:81.0px;width:0.0px;height:0.0px;border-left:5.5px solid transparent;border-right:5.5px solid transparent;border-bottom:6px solid #a3a3a3"></div>
<div class="abs" style="left:2204.3px;top:289.0px;width:20.6px;height:671.0px;background:#c1c1c1"></div>
<div class="abs" style="left:2208.5px;top:1394.0px;width:0.0px;height:0.0px;border-left:5.5px solid transparent;border-right:5.5px solid transparent;border-top:6px solid #505050"></div>
<div class="abs" style="left:1832.0px;top:147.0px;width:370.0px;height:1232.5px;background:#fff;box-shadow:-3px 2px 4px -1px rgba(0,0,0,.25)"></div>
<svg class="abs" style="left:1839px;top:157px" width="27" height="27" viewBox="0 0 27 27"><rect x="2" y="2" width="22" height="22" rx="3" fill="none" stroke="#555" stroke-width="3.6"/><path d="M10 7.5v12l8.5-6z" fill="#555"/></svg>
<svg class="abs" style="left:2157px;top:161px" width="18" height="18" viewBox="0 0 24 24"><path fill="#3a86c8" fill-rule="evenodd" d="M10 1h4l.6 3.2 2.2.9 2.7-1.9 2.8 2.8-1.9 2.7.9 2.2 3.2.6v4l-3.2.6-.9 2.2 1.9 2.7-2.8 2.8-2.7-1.9-2.2.9-.6 3.2h-4l-.6-3.2-2.2-.9-2.7 1.9-2.8-2.8 1.9-2.7-.9-2.2L0 14v-4l3.2-.6.9-2.2-1.9-2.7 2.8-2.8 2.7 1.9 2.2-.9z M12 8a4 4 0 1 0 0 8a4 4 0 1 0 0-8z"/></svg>
<div class="abs" style="left:1832.0px;top:192.0px;width:370.0px;height:62.0px;background:#eeeeee"></div>
<div class="abs" style="left:1832.0px;top:192.0px;width:88.0px;height:62.0px;background:#c9c9c9"></div>
<div class="abs" style="left:1832.0px;top:254.0px;width:370.0px;height:2.7px;background:#dddddd"></div>
<div class="abs" style="left:1832.0px;top:252.0px;width:88.0px;height:2.6px;background:#2a7199"></div>
<div class="abs" style="left:1958.5px;top:252.0px;width:23.5px;height:2.6px;background:#2a7199"></div>
<div class="abs" style="left:2062.5px;top:252.0px;width:29.5px;height:2.6px;background:#2a7199"></div>
<div class="abs" style="left:1855.0px;top:214.5px;width:80.0px;height:20.0px;font-size:16.8px;font-weight:bold;line-height:20px;white-space:nowrap;color:#3d8ef0">Tools</div>
<div class="abs" style="left:1945.0px;top:214.5px;width:80.0px;height:20.0px;font-size:16.8px;font-weight:bold;line-height:20px;white-space:nowrap;color:#111">Filters</div>
<div class="abs" style="left:2042.5px;top:214.5px;width:90.0px;height:20.0px;font-size:16.8px;font-weight:bold;line-height:20px;white-space:nowrap;color:#111">Forecast</div>
<div class="abs" style="left:2178.4px;top:256.7px;width:23.6px;height:1151.3px;background:#f1f1f1"></div>
<div class="abs" style="left:2184.5px;top:267.0px;width:0.0px;height:0.0px;border-left:5.5px solid transparent;border-right:5.5px solid transparent;border-bottom:6px solid #a3a3a3"></div>
<div class="abs" style="left:2180.0px;top:282.2px;width:20.0px;height:821.0px;background:#c1c1c1"></div>
<div class="abs" style="left:2184.5px;top:1394.0px;width:0.0px;height:0.0px;border-left:5.5px solid transparent;border-right:5.5px solid transparent;border-top:6px solid #505050"></div>
<div class="abs" style="left:1832.0px;top:1379.5px;width:346.4px;height:29.0px;background:#eeeeee;box-shadow:inset 3px 2px 4px rgba(0,0,0,.12)"></div>
<div class="abs" style="left:1847.0px;top:278.5px;width:316.0px;height:50.3px;background:#eeeeee;box-shadow:0 1px 4px rgba(0,0,0,.3)"></div>
<div class="abs" style="left:1862.0px;top:298.5px;width:100.0px;height:20.0px;font-size:16.8px;font-weight:bold;line-height:20px;white-space:nowrap;font-size:17.3px;color:#111">Roster</div>
<svg class="abs" style="left:2146px;top:296px" width="16" height="22" viewBox="0 0 16 22"><path d="M3 2.5l8.8 8.5-8.8 8.5" fill="none" stroke="#808080" stroke-width="3.6" stroke-linejoin="miter"/></svg>
<div class="abs" style="left:1847.0px;top:336.6px;width:316.0px;height:1100.0px;background:#fff;box-shadow:0 1px 4px rgba(0,0,0,.3)"></div>
<div class="abs" style="left:1847.0px;top:336.6px;width:316.0px;height:50.0px;background:#c9c9c9"></div>
<div class="abs" style="left:1862.0px;top:355.0px;width:100.0px;height:20.0px;font-size:16.8px;font-weight:bold;line-height:20px;white-space:nowrap;font-size:17.3px;color:#111">Tasks</div>
<svg class="abs" style="left:2141px;top:354px" width="24" height="18" viewBox="0 0 24 18"><path d="M3.5 4l8.3 8 8.3-8" fill="none" stroke="#808080" stroke-width="4.2"/></svg>
<div class="abs" style="left:1856.0px;top:395.3px;width:299.3px;height:50.0px;border:2px solid #cbcbcb;border-radius:6px;background:#fff"></div>
<div class="abs" style="left:1873.5px;top:411.0px;width:200.0px;height:22.0px;font-size:19px;color:#a0a0a0;line-height:22px;white-space:nowrap">find task</div>
<div class="abs" style="left:1862.0px;top:479.0px;width:200.0px;height:22.0px;font-size:19px;color:#888;line-height:22px;white-space:nowrap">Breaks</div>
<div class="abs" style="left:1855.0px;top:509.0px;width:59.5px;height:59.5px;background:#ffff00;border-radius:50%;overflow:hidden"><span style="position:absolute;left:3.5px;right:2px;top:19px;text-align:center;font-size:16px;line-height:22px;color:#222;white-space:nowrap;-webkit-text-stroke:0">Break</span></div>
<div class="abs" style="left:1921.0px;top:509.0px;width:59.5px;height:59.5px;background:#ffff00;border-radius:50%;overflow:hidden"><span style="position:absolute;left:3.5px;right:2px;top:19px;text-align:center;font-size:16px;line-height:22px;color:#222;white-space:nowrap;-webkit-text-stroke:0">Meal</span></div>
<div class="abs" style="left:1862.0px;top:579.0px;width:200.0px;height:22.0px;font-size:19px;color:#888;line-height:22px;white-space:nowrap">Busy</div>
<div class="abs" style="left:1855.0px;top:609.0px;width:59.5px;height:59.5px;background:#0000ff;border-radius:50%;overflow:hidden"><span style="position:absolute;left:3.5px;right:2px;top:19px;text-align:center;font-size:16px;line-height:22px;color:#f6f2e6;white-space:nowrap;-webkit-text-stroke:0.3px #f6f2e6">Admin</span></div>
<div class="abs" style="left:1921.0px;top:609.0px;width:59.5px;height:59.5px;background:#00ffff;border-radius:50%;overflow:hidden"><span style="position:absolute;left:3.5px;right:2px;top:19px;text-align:center;font-size:16px;line-height:22px;color:#f6f2e6;white-space:nowrap;-webkit-text-stroke:0.3px #f6f2e6">Daily</span></div>
<div class="abs" style="left:1987.0px;top:609.0px;width:59.5px;height:59.5px;background:#9b0e78;border-radius:50%;overflow:hidden"><span style="position:absolute;left:3.5px;right:2px;top:19px;text-align:center;font-size:16px;line-height:22px;color:#f6f2e6;white-space:nowrap;-webkit-text-stroke:0.3px #f6f2e6">Escalati</span></div>
<div class="abs" style="left:1862.0px;top:680.0px;width:200.0px;height:22.0px;font-size:19px;color:#888;line-height:22px;white-space:nowrap">Meetings</div>
<div class="abs" style="left:1855.0px;top:709.7px;width:59.5px;height:59.5px;background:#80ff00;border-radius:50%;overflow:hidden"><span style="position:absolute;left:3.5px;right:2px;top:19px;text-align:center;font-size:16px;line-height:22px;color:#222;white-space:nowrap;-webkit-text-stroke:0">1on1</span></div>
<div class="abs" style="left:1921.0px;top:709.7px;width:59.5px;height:59.5px;background:#80ff00;border-radius:50%;overflow:hidden"><span style="position:absolute;left:3.5px;right:2px;top:19px;text-align:center;font-size:16px;line-height:22px;color:#222;white-space:nowrap;-webkit-text-stroke:0">&nbsp;&nbsp;Individual</span></div>
<div class="abs" style="left:1987.0px;top:709.7px;width:59.5px;height:59.5px;background:#adcc52;border-radius:50%;overflow:hidden"><span style="position:absolute;left:3.5px;right:2px;top:19px;text-align:center;font-size:16px;line-height:22px;color:#f6f2e6;white-space:nowrap;-webkit-text-stroke:0.3px #f6f2e6">Massag</span></div>
<div class="abs" style="left:2053.0px;top:709.7px;width:59.5px;height:59.5px;background:#008000;border-radius:50%;overflow:hidden"><span style="position:absolute;left:3.5px;right:2px;top:19px;text-align:center;font-size:16px;line-height:22px;color:#f6f2e6;white-space:nowrap;-webkit-text-stroke:0.3px #f6f2e6">Meeting</span></div>
<div class="abs" style="left:1855.0px;top:776.0px;width:59.5px;height:59.5px;background:#008000;border-radius:50%;overflow:hidden"><span style="position:absolute;left:3.5px;right:2px;top:19px;text-align:center;font-size:16px;line-height:22px;color:#f6f2e6;white-space:nowrap;-webkit-text-stroke:0.3px #f6f2e6">Team</span></div>
<div class="abs" style="left:1862.0px;top:846.0px;width:200.0px;height:22.0px;font-size:19px;color:#888;line-height:22px;white-space:nowrap">Merchant</div>
<div class="abs" style="left:1855.0px;top:875.8px;width:59.5px;height:59.5px;background:#ffc0ff;border-radius:50%;overflow:hidden"><span style="position:absolute;left:3.5px;right:2px;top:19px;text-align:center;font-size:16px;line-height:22px;color:#222;white-space:nowrap;-webkit-text-stroke:0">Merchan</span></div>
<div class="abs" style="left:1921.0px;top:875.8px;width:59.5px;height:59.5px;background:#ff0080;border-radius:50%;overflow:hidden"><span style="position:absolute;left:3.5px;right:2px;top:19px;text-align:center;font-size:16px;line-height:22px;color:#f6f2e6;white-space:nowrap;-webkit-text-stroke:0.3px #f6f2e6">Mercha</span></div>
<div class="abs" style="left:1987.0px;top:875.8px;width:59.5px;height:59.5px;background:#ffd890;border-radius:50%;overflow:hidden"><span style="position:absolute;left:3.5px;right:2px;top:19px;text-align:center;font-size:16px;line-height:22px;color:#222;white-space:nowrap;-webkit-text-stroke:0">Merchan</span></div>
<div class="abs" style="left:2053.0px;top:875.8px;width:59.5px;height:59.5px;background:#ff80c0;border-radius:50%;overflow:hidden"><span style="position:absolute;left:3.5px;right:2px;top:19px;text-align:center;font-size:16px;line-height:22px;color:#f6f2e6;white-space:nowrap;-webkit-text-stroke:0.3px #f6f2e6">&nbsp;Mercha</span></div>
<div class="abs" style="left:1855.0px;top:942.0px;width:59.5px;height:59.5px;background:#ff80c0;border-radius:50%;overflow:hidden"><span style="position:absolute;left:3.5px;right:2px;top:19px;text-align:center;font-size:16px;line-height:22px;color:#f6f2e6;white-space:nowrap;-webkit-text-stroke:0.3px #f6f2e6">Merchan</span></div>
<div class="abs" style="left:1921.0px;top:942.0px;width:59.5px;height:59.5px;background:#1a2905;border-radius:50%;overflow:hidden"><span style="position:absolute;left:3.5px;right:2px;top:19px;text-align:center;font-size:16px;line-height:22px;color:#f6f2e6;white-space:nowrap;-webkit-text-stroke:0.3px #f6f2e6">Salesfor</span></div>
<div class="abs" style="left:1987.0px;top:942.0px;width:59.5px;height:59.5px;background:#8080c0;border-radius:50%;overflow:hidden"><span style="position:absolute;left:3.5px;right:2px;top:19px;text-align:center;font-size:16px;line-height:22px;color:#f6f2e6;white-space:nowrap;-webkit-text-stroke:0.3px #f6f2e6">XBT</span></div>
<div class="abs" style="left:1862.0px;top:1012.5px;width:200.0px;height:22.0px;font-size:19px;color:#888;line-height:22px;white-space:nowrap">Off-Queue</div>
<div class="abs" style="left:1855.0px;top:1043.0px;width:59.5px;height:59.5px;background:#008000;border-radius:50%;overflow:hidden"><span style="position:absolute;left:3.5px;right:2px;top:19px;text-align:center;font-size:16px;line-height:22px;color:#f6f2e6;white-space:nowrap;-webkit-text-stroke:0.3px #f6f2e6">c/back</span></div>
<div class="abs" style="left:1921.0px;top:1043.0px;width:59.5px;height:59.5px;background:#808040;border-radius:50%;overflow:hidden"><span style="position:absolute;left:3.5px;right:2px;top:19px;text-align:center;font-size:16px;line-height:22px;color:#f6f2e6;white-space:nowrap;-webkit-text-stroke:0.3px #f6f2e6">Collecti</span></div>
<div class="abs" style="left:1987.0px;top:1043.0px;width:59.5px;height:59.5px;background:#7a0010;border-radius:50%;overflow:hidden"><span style="position:absolute;left:3.5px;right:2px;top:19px;text-align:center;font-size:16px;line-height:22px;color:#f6f2e6;white-space:nowrap;-webkit-text-stroke:0.3px #f6f2e6">Escalati</span></div>
<div class="abs" style="left:2053.0px;top:1043.0px;width:59.5px;height:59.5px;background:#008000;border-radius:50%;overflow:hidden"><span style="position:absolute;left:3.5px;right:2px;top:19px;text-align:center;font-size:16px;line-height:22px;color:#f6f2e6;white-space:nowrap;-webkit-text-stroke:0.3px #f6f2e6">Hardshi</span></div>
<div class="abs" style="left:1855.0px;top:1109.0px;width:59.5px;height:59.5px;background:#eba55a;border-radius:50%;overflow:hidden"><span style="position:absolute;left:3.5px;right:2px;top:19px;text-align:center;font-size:16px;line-height:22px;color:#f6f2e6;white-space:nowrap;-webkit-text-stroke:0.3px #f6f2e6">Hardshi</span></div>
<div class="abs" style="left:1921.0px;top:1109.0px;width:59.5px;height:59.5px;background:#0000ff;border-radius:50%;overflow:hidden"><span style="position:absolute;left:3.5px;right:2px;top:19px;text-align:center;font-size:16px;line-height:22px;color:#f6f2e6;white-space:nowrap;-webkit-text-stroke:0.3px #f6f2e6">Inductio</span></div>
<div class="abs" style="left:1987.0px;top:1109.0px;width:59.5px;height:59.5px;background:#ff8000;border-radius:50%;overflow:hidden"><span style="position:absolute;left:3.5px;right:2px;top:19px;text-align:center;font-size:16px;line-height:22px;color:#f6f2e6;white-space:nowrap;-webkit-text-stroke:0.3px #f6f2e6">Manual</span></div>
<div class="abs" style="left:2053.0px;top:1109.0px;width:59.5px;height:59.5px;background:#ff80ff;border-radius:50%;overflow:hidden"><span style="position:absolute;left:3.5px;right:2px;top:19px;text-align:center;font-size:16px;line-height:22px;color:#f6f2e6;white-space:nowrap;-webkit-text-stroke:0.3px #f6f2e6">Merchan</span></div>
<div class="abs" style="left:1855.0px;top:1175.3px;width:59.5px;height:59.5px;background:#1a1ae6;border-radius:50%;overflow:hidden"><span style="position:absolute;left:3.5px;right:2px;top:19px;text-align:center;font-size:16px;line-height:22px;color:#f6f2e6;white-space:nowrap;-webkit-text-stroke:0.3px #f6f2e6">Overtim</span></div>
<div class="abs" style="left:1921.0px;top:1175.3px;width:59.5px;height:59.5px;background:#0000ff;border-radius:50%;overflow:hidden"><span style="position:absolute;left:3.5px;right:2px;top:19px;text-align:center;font-size:16px;line-height:22px;color:#f6f2e6;white-space:nowrap;-webkit-text-stroke:0.3px #f6f2e6">PLAY</span></div>
<div class="abs" style="left:1987.0px;top:1175.3px;width:59.5px;height:59.5px;background:#8000ff;border-radius:50%;overflow:hidden"><span style="position:absolute;left:3.5px;right:2px;top:19px;text-align:center;font-size:16px;line-height:22px;color:#f6f2e6;white-space:nowrap;-webkit-text-stroke:0.3px #f6f2e6">Remedia</span></div>
<div class="abs" style="left:2053.0px;top:1175.3px;width:59.5px;height:59.5px;background:#ff8040;border-radius:50%;overflow:hidden"><span style="position:absolute;left:3.5px;right:2px;top:19px;text-align:center;font-size:16px;line-height:22px;color:#f6f2e6;white-space:nowrap;-webkit-text-stroke:0.3px #f6f2e6">Salesfo</span></div>
<div class="abs" style="left:1855.0px;top:1241.5px;width:59.5px;height:59.5px;background:#ff5500;border-radius:50%;overflow:hidden"><span style="position:absolute;left:3.5px;right:2px;top:19px;text-align:center;font-size:16px;line-height:22px;color:#f6f2e6;white-space:nowrap;-webkit-text-stroke:0.3px #f6f2e6">Step Up</span></div>
<div class="abs" style="left:1921.0px;top:1241.5px;width:59.5px;height:59.5px;background:#80b020;border-radius:50%;overflow:hidden"><span style="position:absolute;left:3.5px;right:2px;top:19px;text-align:center;font-size:16px;line-height:22px;color:#f6f2e6;white-space:nowrap;-webkit-text-stroke:0.3px #f6f2e6">Ticket</span></div>
<div class="abs" style="left:1987.0px;top:1241.5px;width:59.5px;height:59.5px;background:#ff8080;border-radius:50%;overflow:hidden"><span style="position:absolute;left:3.5px;right:2px;top:19px;text-align:center;font-size:16px;line-height:22px;color:#f6f2e6;white-space:nowrap;-webkit-text-stroke:0.3px #f6f2e6">token</span></div>
<div class="abs" style="left:1862.0px;top:1310.0px;width:200.0px;height:22.0px;font-size:19px;color:#888;line-height:22px;white-space:nowrap">On-Queue</div>
<div class="abs" style="left:1855.0px;top:1341.5px;width:59.5px;height:59.5px;background:#8a1aa0;border-radius:50%;overflow:hidden"><span style="position:absolute;left:3.5px;right:2px;top:19px;text-align:center;font-size:16px;line-height:22px;color:#f6f2e6;white-space:nowrap;-webkit-text-stroke:0.3px #f6f2e6">Hardshi</span></div>
<div class="abs" style="left:1921.0px;top:1341.5px;width:59.5px;height:59.5px;background:#8000ff;border-radius:50%;overflow:hidden"><span style="position:absolute;left:3.5px;right:2px;top:19px;text-align:center;font-size:16px;line-height:22px;color:#f6f2e6;white-space:nowrap;-webkit-text-stroke:0.3px #f6f2e6">Merchan</span></div>
<div class="abs" style="left:1987.0px;top:1341.5px;width:59.5px;height:59.5px;background:#8000ff;border-radius:50%;overflow:hidden"><span style="position:absolute;left:3.5px;right:2px;top:19px;text-align:center;font-size:16px;line-height:22px;color:#f6f2e6;white-space:nowrap;-webkit-text-stroke:0.3px #f6f2e6">On</span></div>
<div class="abs" style="left:2053.0px;top:1341.5px;width:59.5px;height:59.5px;background:#ff0000;border-radius:50%;overflow:hidden"><span style="position:absolute;left:3.5px;right:2px;top:19px;text-align:center;font-size:16px;line-height:22px;color:#f6f2e6;white-space:nowrap;-webkit-text-stroke:0.3px #f6f2e6">Voicema</span></div>
</div>
<svg class="abs" style="left:0;top:360px;z-index:50" width="24" height="36" viewBox="0 360 24 36"><path d="M1.5 365.3V388.2L2.3 388.4L6.6 384.2L10.2 391.3L14.4 389.3L11.5 383.6L18.6 383.3Z" fill="#fff" stroke="#1b1b26" stroke-width="1.5" stroke-linejoin="round"/></svg>
</body></html>
